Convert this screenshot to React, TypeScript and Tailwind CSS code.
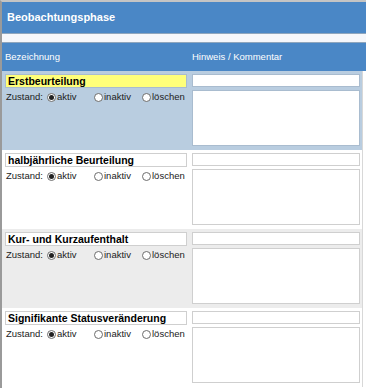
const ROWS: { label: string; bg: string; labelBg: string; border: string }[] = [
  { label: 'Erstbeurteilung', bg: 'bg-[#b9cde0]', labelBg: 'bg-[#ffff7a]', border: 'border-[#a9bccf]' },
  { label: 'halbjährliche Beurteilung', bg: 'bg-white', labelBg: 'bg-white', border: 'border-[#cfcfcf]' },
  { label: 'Kur- und Kurzaufenthalt', bg: 'bg-[#ececec]', labelBg: 'bg-white', border: 'border-[#cfcfcf]' },
  { label: 'Signifikante Statusveränderung', bg: 'bg-white', labelBg: 'bg-white', border: 'border-[#cfcfcf]' },
];

function Radio({ checked, label }: { checked?: boolean; label: string }) {
  return (
    <span className="flex items-center gap-[1px]">
      <span className="w-[9px] h-[9px] rounded-full border border-[#6d6d6d] bg-white flex items-center justify-center">
        {checked && <span className="w-[5px] h-[5px] rounded-full bg-[#222]" />}
      </span>
      <span>{label}</span>
    </span>
  );
}

export default function App() {
  return (
    <div className="w-[366px] h-[388px] bg-white border-l-2 border-t-2 border-l-[#9a9a9a] border-t-[#c4c4c4] font-['Liberation_Sans',Arial,sans-serif] overflow-hidden">
      {/* Title bar */}
      <div className="h-[31px] bg-[#4a87c6] flex items-center px-[5px] text-white font-bold text-[11px]">
        Beobachtungsphase
      </div>
      <div className="h-[10px] bg-[#f5f7fb] border-y border-[#8fa6bd]" />

      {/* Column headers */}
      <div className="h-[28px] bg-[#4a87c6] grid grid-cols-[187px_1fr] items-center text-white text-[9.5px]">
        <span className="pl-[3px]">Bezeichnung</span>
        <span className="pl-[3px]">Hinweis / Kommentar</span>
      </div>

      {/* Rows */}
      <div className="mr-[3px] border-r border-[#d8d8d8]">
        {ROWS.map((row, i) => (
          <div key={i} className={`${row.bg} grid grid-cols-[182px_1fr] pl-[3px] pr-[2px] pt-[3px] pb-[3px] h-[79px]`}>
            <div className="flex flex-col gap-[2px]">
              <div className={`h-[14px] border ${row.border} ${row.labelBg} text-black font-bold text-[10.5px] leading-[12px] pl-[2px] truncate`}>
                {row.label}
              </div>
              <div className="flex items-center text-[9.5px] text-[#222] pl-[1px]">
                <span className="w-[41px]">Zustand:</span>
                <span className="w-[47px]"><Radio checked label="aktiv" /></span>
                <span className="w-[48px]"><Radio label="inaktiv" /></span>
                <Radio label="löschen" />
              </div>
            </div>
            <div className="flex flex-col gap-[3px] pl-[5px]">
              <div className={`h-[13px] border ${row.border} bg-white`} />
              <div className={`h-[56px] border ${row.border} bg-white`} />
            </div>
          </div>
        ))}
      </div>
    </div>
  );
}
